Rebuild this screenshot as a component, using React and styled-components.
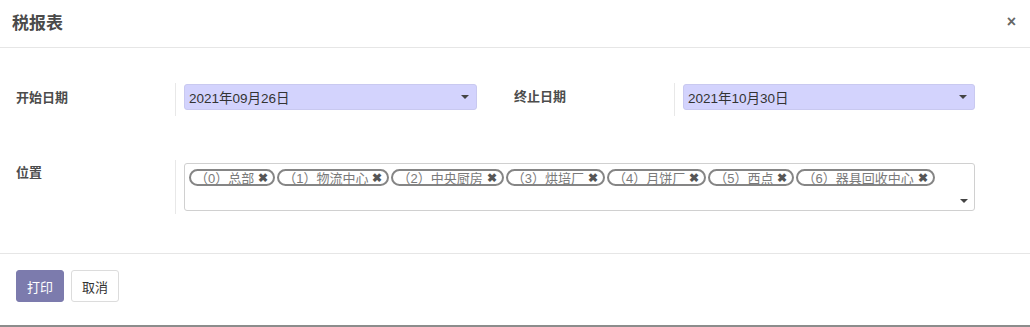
import styled, { createGlobalStyle } from "styled-components";

const GlobalStyle = createGlobalStyle`
  html, body {
    margin: 0;
    padding: 0;
    background: #ffffff;
  }
  body {
    font-family: "Liberation Sans", "Noto Sans CJK SC", Arial, sans-serif;
    font-size: 13px;
    color: #333;
  }
`;

const Dialog = styled.div`
  width: 1030px;
  height: 325px;
  display: flex;
  flex-direction: column;
  background: #fff;
  border-bottom: 2px solid #8c8c8c;
`;

const Header = styled.div`
  height: 48px;
  box-sizing: border-box;
  border-bottom: 1px solid #e6e6e6;
  display: flex;
  align-items: center;
  justify-content: space-between;
  padding: 0 12px 4px 12px;
`;

const Title = styled.h4`
  margin: 0;
  font-size: 17px;
  font-weight: bold;
  color: #4a4a4a;
`;

const Close = styled.span`
  font-size: 16px;
  font-weight: bold;
  color: #666;
  margin-right: 2px;
  line-height: 1;
`;

const Body = styled.div`
  height: 206px;
  box-sizing: border-box;
  padding: 35px 55px 0 16px;
  border-bottom: 1px solid #e6e6e6;
  display: flex;
  flex-direction: column;
  gap: 44px;
`;

const Row = styled.div`
  display: flex;
  align-items: stretch;
`;

const Label = styled.div`
  width: ${(p) => p.$width}px;
  margin-left: ${(p) => p.$offset || 0}px;
  flex-shrink: 0;
  font-weight: bold;
  font-size: 13px;
  color: #4c4c4c;
  padding-top: ${(p) => p.$top}px;
`;

const Field = styled.div`
  border-left: 1px solid #e8e8e8;
  padding: ${(p) => p.$pad};
  width: ${(p) => p.$width}px;
  box-sizing: border-box;
  flex-shrink: 0;
`;

const DateInput = styled.div`
  height: 26px;
  box-sizing: border-box;
  background: #d3d3fd;
  border: 1px solid #c9c9f0;
  border-radius: 3px;
  display: flex;
  align-items: center;
  justify-content: space-between;
  padding: 0 7px 0 4px;
  font-size: 13.5px;
  color: #333;
`;

const Caret = styled.span`
  width: 0;
  height: 0;
  border-left: 4px solid transparent;
  border-right: 4px solid transparent;
  border-top: 4px solid #444;
`;

const TagBox = styled.div`
  height: 48px;
  box-sizing: border-box;
  border: 1px solid #d0d0d0;
  border-radius: 3px;
  padding: 5px 5px 0 4px;
  display: flex;
  flex-direction: column;
`;

const Tags = styled.div`
  display: flex;
  gap: 2px;
`;

const Tag = styled.span`
  height: 17px;
  box-sizing: border-box;
  border: 2px solid #858585;
  border-radius: 9px;
  display: inline-flex;
  align-items: center;
  padding: 0 5px 0 4px;
  font-size: 13px;
  color: #7a7a7a;
  white-space: nowrap;
`;

const TagX = styled.span`
  font-size: 12px;
  color: #555;
  font-weight: bold;
  margin-left: 4px;
`;

const BoxCaret = styled.div`
  margin-top: auto;
  margin-bottom: 7px;
  align-self: flex-end;
  display: flex;
  padding-right: 1px;
`;

const Footer = styled.div`
  flex: 1;
  display: flex;
  align-items: flex-start;
  gap: 7px;
  padding: 16px 16px 0 16px;
`;

const Button = styled.button`
  height: 32px;
  width: 48px;
  box-sizing: border-box;
  border-radius: 3px;
  font-family: inherit;
  font-size: 13px;
  padding: 0;
  background: ${(p) => (p.$primary ? "#7c7bad" : "#fff")};
  color: ${(p) => (p.$primary ? "#fff" : "#333")};
  border: 1px solid ${(p) => (p.$primary ? "#7c7bad" : "#dcdcdc")};
`;

const locations = [
  "（0）总部",
  "（1）物流中心",
  "（2）中央厨房",
  "（3）烘培厂",
  "（4）月饼厂",
  "（5）西点",
  "（6）器具回收中心",
];

export default function App() {
  return (
    <>
      <GlobalStyle />
      <Dialog>
        <Header>
          <Title>税报表</Title>
          <Close>×</Close>
        </Header>
        <Body>
          <Row>
            <Label $width={159} $top={4}>开始日期</Label>
            <Field $width={302} $pad="1px 0 6px 8px">
              <DateInput>
                <span>2021年09月26日</span>
                <Caret />
              </DateInput>
            </Field>
            <Label $width={160} $offset={37} $top={3}>终止日期</Label>
            <Field $width={301} $pad="1px 0 6px 8px">
              <DateInput>
                <span>2021年10月30日</span>
                <Caret />
              </DateInput>
            </Field>
          </Row>
          <Row>
            <Label $width={159} $top={2}>位置</Label>
            <Field $width={800} $pad="3px 0 3px 8px">
              <TagBox>
                <Tags>
                  {locations.map((l) => (
                    <Tag key={l}>
                      {l}
                      <TagX>✖</TagX>
                    </Tag>
                  ))}
                </Tags>
                <BoxCaret>
                  <Caret />
                </BoxCaret>
              </TagBox>
            </Field>
          </Row>
        </Body>
        <Footer>
          <Button $primary>打印</Button>
          <Button>取消</Button>
        </Footer>
      </Dialog>
    </>
  );
}
